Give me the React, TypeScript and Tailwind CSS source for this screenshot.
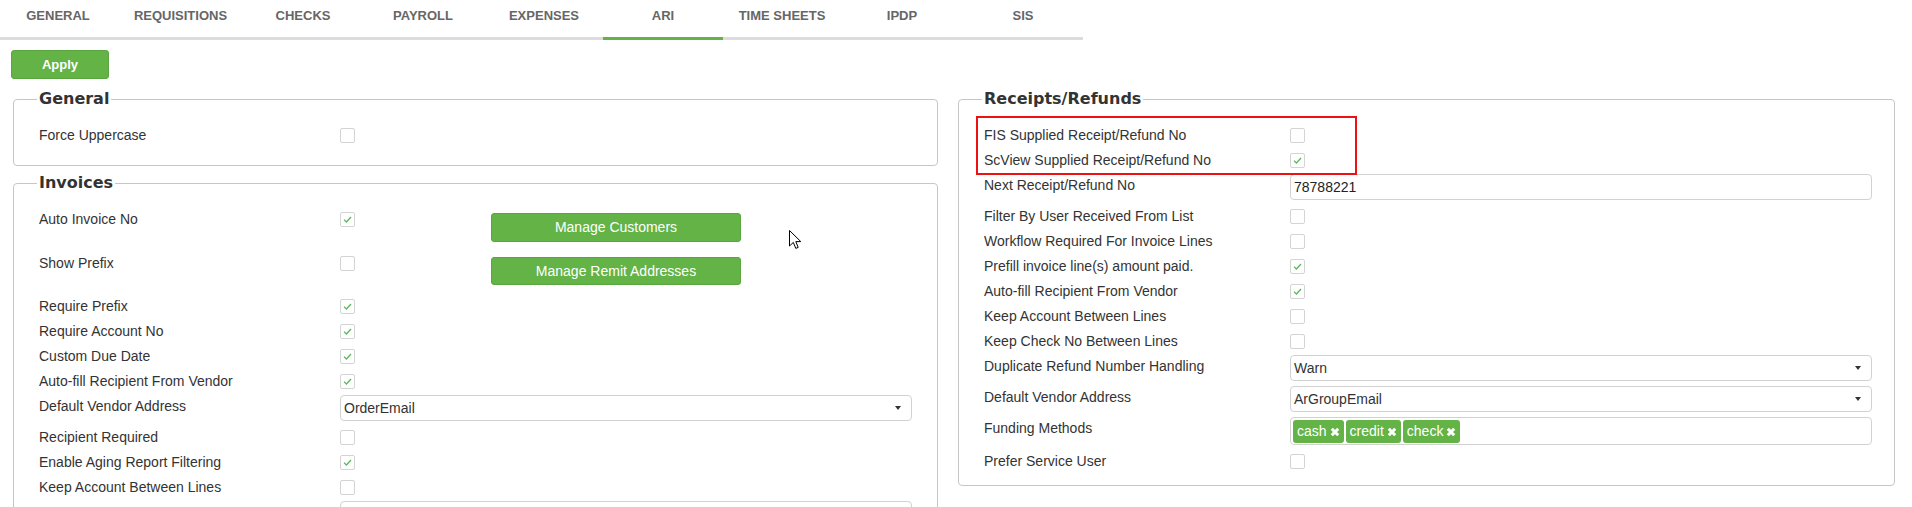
import type { ReactNode } from 'react';

const tabs = [
    { name: 'GENERAL', w: 'w-[116px]' },
    { name: 'REQUISITIONS', w: 'w-[129px]' },
    { name: 'CHECKS', w: 'w-[116px]' },
    { name: 'PAYROLL', w: 'w-[124px]' },
    { name: 'EXPENSES', w: 'w-[118px]' },
    { name: 'ARI', w: 'w-[120px]', active: true },
    { name: 'TIME SHEETS', w: 'w-[118px]' },
    { name: 'IPDP', w: 'w-[122px]' },
    { name: 'SIS', w: 'w-[120px]' },
];

function Check({ checked }: { checked?: boolean }) {
    return (
        <span className="mt-[4px] flex h-[15px] w-[15px] shrink-0 items-center justify-center rounded-[2px] border border-[#d4d4d4] bg-white">
            {checked && (
                <svg width="9" height="7" viewBox="0 0 9 7" fill="none">
                    <path d="M1 3.6 L3.4 6 L8 1" stroke="#5cb85c" strokeWidth="1.3" />
                </svg>
            )}
        </span>
    );
}

function Select({ value, w }: { value: string; w: string }) {
    return (
        <div className={`flex h-[26px] ${w} items-center justify-between rounded-[4px] border border-[#d2d2d2] bg-white pr-[10px] pl-[3px] text-[14px] text-[#333]`}>
            <span>{value}</span>
            <span className="h-0 w-0 border-x-[3px] border-t-[4px] border-x-transparent border-t-[#333]" />
        </div>
    );
}

function Label({ text, lw }: { text: string; lw: string }) {
    return <div className={`${lw} relative top-[1px] shrink-0 text-[14px] leading-[20px] text-[#333]`}>{text}</div>;
}

function Row({ label, lw, children }: { label: string; lw: string; children: ReactNode }) {
    return (
        <div className="flex items-start">
            <Label text={label} lw={lw} />
            {children}
        </div>
    );
}

function Tag({ text }: { text: string }) {
    return (
        <span className="flex h-[23px] items-center gap-[3px] rounded-[3px] bg-[#63b347] px-[4px] text-[14px] text-white">
            {text}
            <svg width="10" height="10" viewBox="0 0 10 10">
                <path d="M1.8 1.8 L8.2 8.2 M8.2 1.8 L1.8 8.2" stroke="white" strokeWidth="3" />
            </svg>
        </span>
    );
}

function GreenButton({ children, h }: { children: ReactNode; h: string }) {
    return (
        <div className={`mt-[5px] ml-[136px] flex ${h} w-[250px] items-center justify-center rounded-[3px] border border-[#58a63d] bg-[#63b347] text-[14px] text-white`}>
            {children}
        </div>
    );
}

function Box({ title, children, className }: { title: string; children: ReactNode; className?: string }) {
    return (
        <fieldset className={`rounded-[4px] border border-[#c6c6c6] pt-[15px] pl-[23px] ${className ?? ''}`}>
            <legend className="px-[2px] font-['DejaVu_Sans',Verdana,sans-serif] text-[16px] leading-[20px] font-bold text-[#333]">
                {title}
            </legend>
            <div className="flex flex-col gap-[5px] pl-[2px]">{children}</div>
        </fieldset>
    );
}

const L = 'w-[301px]';
const R = 'w-[306px]';

export default function App() {
    return (
        <div className="relative min-h-[507px] bg-white font-['Liberation_Sans',Arial,sans-serif]">
            <div className="flex">
                {tabs.map((t) => (
                    <div
                        key={t.name}
                        className={`${t.w} flex h-[40px] justify-center border-b-[3px] pt-[8px] text-[13px] leading-[16px] font-bold text-[#666] ${
                            t.active ? 'border-[#63b347]' : 'border-[#dcdcdc]'
                        }`}
                    >
                        {t.name}
                    </div>
                ))}
            </div>

            <div className="mt-[10px] ml-[11px] flex h-[29px] w-[98px] items-center justify-center rounded-[3px] border border-[#58a63d] bg-[#63b347] text-[13px] font-bold text-white">
                Apply
            </div>

            <div className="mt-[10px] flex items-start gap-[20px] pl-[13px]">
                <div className="w-[925px] shrink-0">
                    <Box title="General" className="pb-[21px]">
                        <Row label="Force Uppercase" lw={L}>
                            <Check />
                        </Row>
                    </Box>

                    <Box title="Invoices" className="mt-[7px] pb-[40px]">
                        <div className="flex items-start">
                            <Label text="Auto Invoice No" lw={L} />
                            <Check checked />
                            <div className="mb-[5px]">
                                <GreenButton h="h-[29px]">Manage Customers</GreenButton>
                            </div>
                        </div>
                        <div className="flex items-start">
                            <Label text="Show Prefix" lw={L} />
                            <Check />
                            <div className="mb-[5px]">
                                <GreenButton h="h-[28px]">Manage Remit Addresses</GreenButton>
                            </div>
                        </div>
                        <Row label="Require Prefix" lw={L}>
                            <Check checked />
                        </Row>
                        <Row label="Require Account No" lw={L}>
                            <Check checked />
                        </Row>
                        <Row label="Custom Due Date" lw={L}>
                            <Check checked />
                        </Row>
                        <Row label="Auto-fill Recipient From Vendor" lw={L}>
                            <Check checked />
                        </Row>
                        <Row label="Default Vendor Address" lw={L}>
                            <Select value="OrderEmail" w="w-[572px]" />
                        </Row>
                        <Row label="Recipient Required" lw={L}>
                            <Check />
                        </Row>
                        <Row label="Enable Aging Report Filtering" lw={L}>
                            <Check checked />
                        </Row>
                        <Row label="Keep Account Between Lines" lw={L}>
                            <Check />
                        </Row>
                        <Row label="" lw={L}>
                            <Select value="" w="w-[572px]" />
                        </Row>
                    </Box>
                </div>

                <div className="w-[937px] shrink-0">
                    <Box title="Receipts/Refunds" className="pb-[15px]">
                        <div className="relative flex flex-col gap-[5px]">
                            <Row label="FIS Supplied Receipt/Refund No" lw={R}>
                                <Check />
                            </Row>
                            <Row label="ScView Supplied Receipt/Refund No" lw={R}>
                                <Check checked />
                            </Row>
                            <div className="absolute top-[-8px] left-[-8px] h-[59px] w-[381px] border-2 border-[#ee1111]" />
                        </div>
                        <Row label="Next Receipt/Refund No" lw={R}>
                            <div className="flex h-[26px] w-[582px] items-center rounded-[4px] border border-[#d2d2d2] pl-[3px] text-[14px] text-[#222]">
                                78788221
                            </div>
                        </Row>
                        <Row label="Filter By User Received From List" lw={R}>
                            <Check />
                        </Row>
                        <Row label="Workflow Required For Invoice Lines" lw={R}>
                            <Check />
                        </Row>
                        <Row label="Prefill invoice line(s) amount paid." lw={R}>
                            <Check checked />
                        </Row>
                        <Row label="Auto-fill Recipient From Vendor" lw={R}>
                            <Check checked />
                        </Row>
                        <Row label="Keep Account Between Lines" lw={R}>
                            <Check />
                        </Row>
                        <Row label="Keep Check No Between Lines" lw={R}>
                            <Check />
                        </Row>
                        <Row label="Duplicate Refund Number Handling" lw={R}>
                            <Select value="Warn" w="w-[582px]" />
                        </Row>
                        <Row label="Default Vendor Address" lw={R}>
                            <Select value="ArGroupEmail" w="w-[582px]" />
                        </Row>
                        <Row label="Funding Methods" lw={R}>
                            <div className="flex h-[28px] w-[582px] items-start gap-[2px] rounded-[4px] border border-[#d2d2d2] pt-[2px] pl-[2px]">
                                <Tag text="cash" />
                                <Tag text="credit" />
                                <Tag text="check" />
                            </div>
                        </Row>
                        <Row label="Prefer Service User" lw={R}>
                            <Check />
                        </Row>
                    </Box>
                </div>
            </div>

            <svg className="absolute top-[230px] left-[789px]" width="13" height="20" viewBox="0 0 13 20">
                <path
                    d="M0.5 0.5 L0.5 16 L4.3 12.4 L6.8 18.4 L9.2 17.4 L6.8 11.6 L11.8 11.6 Z"
                    fill="white"
                    stroke="black"
                    strokeWidth="1"
                    strokeLinejoin="round"
                />
            </svg>
        </div>
    );
}
